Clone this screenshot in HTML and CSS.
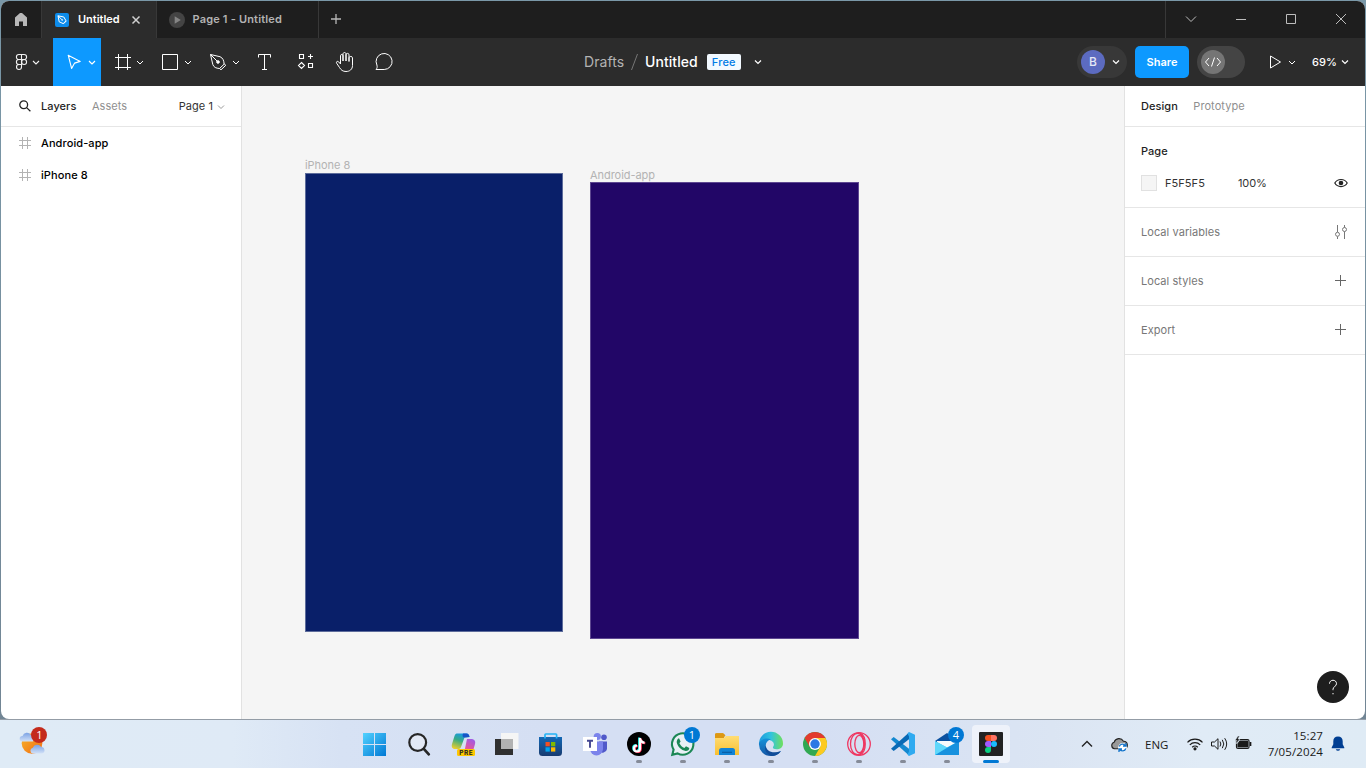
FILE: index.html
```html
<!DOCTYPE html>
<html lang="en">
<head>
<meta charset="utf-8">
<title>Untitled</title>
<link rel="stylesheet" href="styles.css">
</head>
<body>
<div class="window">
  <header class="tabs">
    <div class="tab-home"><svg width="40" height="37" viewBox="1 1 40 37"><path d="M15 17.600 20 13h2l5 4.600V26h-4v-4.500h-4V26H15z" fill="#b8b8b8"/></svg></div>
    <div class="tab active">
      <svg class="tab-icon" width="14" height="14" viewBox="55 12 14 14"><rect x="55" y="12" width="14" height="14" rx="2" fill="#0d8ceb"/><path d="M58 14.800 63.800 16l2.200 3.800-2.800 2.800-4-1.800zM58 14.800l4 4M63.500 22.800l3-3" fill="none" stroke="#fff" stroke-width="1"/><circle cx="62.200" cy="19" r=".8" fill="#fff"/></svg>
      <span class="tab-name">Untitled</span>
      <svg class="tab-close" width="10" height="10" viewBox="0 0 10 10"><path d="M1.500 1.500l7 7M8.500 1.500l-7 7" stroke="#d0d0d0" stroke-width="1.500"/></svg>
    </div>
    <div class="tab second">
      <svg class="tab-icon" width="16" height="16" viewBox="0 0 16 16"><circle cx="8" cy="8" r="8" fill="#444"/><path d="M5.700 4.200v7.600L11.800 8z" fill="#858585"/></svg>
      <span class="tab-name">Page 1 - Untitled</span>
    </div>
    <svg class="tab-add" width="34" height="37" viewBox="319 1 34 37"><path d="M331 19h10M336 14v10" stroke="#b8b8b8" stroke-width="1.300"/></svg>
    <svg class="window-controls" width="199" height="37" viewBox="1166 1 199 37" fill="none" stroke="#bdbdbd"><path d="M1186 16.500l5 5 5-5M1236 19.500h10M1286.500 14.500h9v9h-9zM1336 14l10 10M1346 14l-10 10"/></svg>
  </header>

  <div class="toolbar">
    <div class="tools">
      <svg width="52" height="48" viewBox="1 38 52 48" fill="none" stroke="#f2f2f2" stroke-width="1.100"><path d="M21.500 54.500h-2.600a2.500 2.500 0 0 0 0 5h2.600zM21.500 54.500h2.600a2.500 2.500 0 0 1 0 5h-2.600zM21.500 59.500h-2.600a2.500 2.500 0 0 0 0 5h2.600zM21.500 64.500h-2.600a2.500 2.500 0 1 0 2.600 2.500z"/><circle cx="24.100" cy="62" r="2.500"/><path d="M33 61l3 3 3-3"/></svg>
      <svg class="selected" width="48" height="48" viewBox="53 38 48 48" fill="none" stroke="#fff" stroke-width="1.100"><path d="M68.200 55.200l12 6.200-5.600 1.700-3 5.300zM89 61l3 3 3-3" stroke-linejoin="round"/></svg>
      <svg width="48" height="48" viewBox="101 38 48 48" fill="none" stroke="#fff"><path d="M115 57.500h16M115 67.500h16M118.500 54v16M127.500 54v16M137 61l3 3 3-3"/></svg>
      <svg width="48" height="48" viewBox="149 38 48 48" fill="none" stroke="#fff"><path d="M162.500 54.500h15v15h-15zM185 61l3 3 3-3"/></svg>
      <svg width="48" height="48" viewBox="197 38 48 48" fill="none" stroke="#fff"><path d="M210.500 54.500l9.500 2.200c3 1.300 4 4 4.100 7.500l-4.600 4.300c-3.500-.2-5.700-1.200-6.700-4zM210.500 54.500l6.600 6.600M219.500 68.500l1.500 1.300 4.800-4.500-1.700-1.500M233 61l3 3 3-3"/><circle cx="218" cy="62" r="1.300" fill="#fff"/></svg>
      <svg width="40" height="48" viewBox="245 38 40 48" fill="none" stroke="#fff"><path d="M258.500 57.500v-3h12v3M264.500 54.500v15M262 69.500h5"/></svg>
      <svg width="40" height="48" viewBox="285 38 40 48" fill="none" stroke="#fff" stroke-width="1.100"><path d="M299.500 54.500h4v4h-4zM308.500 63.500h4v4h-4zM310.500 54v5M308 56.500h5M301.500 62.500l3 3-3 3-3-3z"/></svg>
      <svg width="40" height="48" viewBox="325 38 40 48" fill="none" stroke="#fff"><path d="M340.500 64v-8.200c0-1.800 2.500-1.800 2.500 0V61v-7c0-2 3-2 3 0v7-6.200c0-1.900 3-1.900 3 0V61.500v-3.700c0-1.800 3.500-1.800 3.500 0v7.700c0 4-3 6-6.500 6-3.200 0-5-1.500-6.500-4l-2.800-4.200c-1-1.500.8-2.700 2-1.400z" stroke-linejoin="round"/></svg>
      <svg width="40" height="48" viewBox="365 38 40 48" fill="none" stroke="#fff"><path d="M376 69.500c1.300-1.500 1.400-2.700.9-4.500a8 8 0 1 1 7.300 4.500z" stroke-linejoin="round"/></svg>
    </div>
    <div class="file-title">
      <span class="folder">Drafts</span>
      <svg class="slash" width="7" height="16" viewBox="0 0 7 16"><path d="M6.500 0 .5 16" stroke="#777"/></svg>
      <span class="file-name">Untitled</span>
      <span class="plan">Free</span>
      <svg width="8" height="6" viewBox="0 0 8 6"><path d="M1 1.500l3 3 3-3" fill="none" stroke="#fff" stroke-width="1.200"/></svg>
    </div>
    <div class="actions">
      <div class="user"><span class="avatar">B</span><svg width="8" height="6" viewBox="0 0 8 6"><path d="M1 1.500l3 3 3-3" fill="none" stroke="#fff" stroke-width="1.200"/></svg></div>
      <button class="share">Share</button>
      <svg class="dev" width="48" height="32" viewBox="1197 46 48 32"><rect x="1197" y="46" width="48" height="32" rx="16" fill="#444"/><circle cx="1213" cy="62" r="12" fill="#757575"/><path d="M1209 58l-3.500 4 3.500 4M1217 58l3.500 4-3.500 4M1214.500 57.500l-3 9" fill="none" stroke="#fff"/></svg>
      <svg class="play" width="28" height="16" viewBox="1269 54 28 16" fill="none" stroke="#fff"><path d="M1270.500 56v12l10-6zM1289 61l3 3 3-3"/></svg>
      <span class="zoom">69%</span>
      <svg width="8" height="6" viewBox="0 0 8 6"><path d="M1 1.500l3 3 3-3" fill="none" stroke="#fff" stroke-width="1.200"/></svg>
    </div>
  </div>

  <main class="workspace">
    <aside class="layers">
      <div class="panel-head">
        <svg class="find" width="12" height="12" viewBox="0 0 12 12" fill="none" stroke="#222" stroke-width="1.300"><circle cx="4.700" cy="4.700" r="3.900"/><path d="M7.600 7.600l3.800 3.600"/></svg>
        <span class="strong">Layers</span><span class="muted assets">Assets</span>
        <span class="page-pick">Page 1</span>
        <svg width="8" height="6" viewBox="0 0 8 6"><path d="M1 1.500l3 3 3-3" fill="none" stroke="#999"/></svg>
      </div>
      <div class="layer"><svg width="12" height="12" viewBox="0 0 12 12"><path d="M0 3.500h12M0 8.500h12M3.500 0v12M8.500 0v12" stroke="#b3b3b3"/></svg>Android-app</div>
      <div class="layer"><svg width="12" height="12" viewBox="0 0 12 12"><path d="M0 3.500h12M0 8.500h12M3.500 0v12M8.500 0v12" stroke="#b3b3b3"/></svg>iPhone 8</div>
    </aside>
    <section class="canvas">
      <div class="artboard iphone"><span class="artboard-name">iPhone 8</span></div>
      <div class="artboard android"><span class="artboard-name">Android-app</span></div>
    </section>
    <aside class="inspector">
      <div class="panel-head"><span class="strong">Design</span><span class="muted proto">Prototype</span></div>
      <div class="page-section">
        <div class="strong">Page</div>
        <div class="fill">
          <span class="swatch"></span><span class="hex">F5F5F5</span><span class="opacity">100%</span>
          <svg width="14" height="10" viewBox="0 0 14 10"><path d="M.8 5C3.500.3 10.500.3 13.200 5 10.500 9.700 3.500 9.700.8 5z" fill="none" stroke="#222" stroke-width="1.200"/><circle cx="7" cy="5" r="2.300" fill="#222"/></svg>
        </div>
      </div>
      <div class="row">Local variables<svg width="14" height="16" viewBox="0 0 14 16" fill="none" stroke="#777"><path d="M3.500 1v7M3.500 12.500V15M10.500 1v2.500M10.500 7.500V15"/><circle cx="3.500" cy="10.300" r="2"/><circle cx="10.500" cy="5.500" r="2"/></svg></div>
      <div class="row">Local styles<svg class="plus" width="12" height="12" viewBox="0 0 12 12"><path d="M0 5.500h11M5.500 0v11" stroke="#666"/></svg></div>
      <div class="row">Export<svg class="plus" width="12" height="12" viewBox="0 0 12 12"><path d="M0 5.500h11M5.500 0v11" stroke="#666"/></svg></div>
      <button class="help"><svg width="32" height="32" viewBox="0 0 32 32"><path d="M12.500 12.700c0-4.600 7-4.600 7 0 0 2.800-3.500 2.800-3.500 5.500v1M16 22v1.300" fill="none" stroke="#fff"/></svg></button>
    </aside>
  </main>
</div>

<footer class="taskbar">
  <svg class="weather" width="60" height="48" viewBox="0 720 60 48">
    <defs>
      <linearGradient id="sun" x1="0" x2="1" y2="1"><stop stop-color="#f8b62c"/><stop offset="1" stop-color="#f06a12"/></linearGradient>
      <linearGradient id="cloud" x2="0" y2="1"><stop stop-color="#7ba2e4"/><stop offset="1" stop-color="#d2e1f7"/></linearGradient>
    </defs>
    <circle cx="32" cy="743.500" r="10.300" fill="url(#sun)"/>
    <path d="M22.500 741.500a2.800 2.800 0 0 1 0-5.600 4.600 4.600 0 0 1 8.400-.9 3.200 3.200 0 0 1 1.800 6.500z" fill="url(#cloud)"/>
    <path d="M32.500 753.500a3 3 0 0 1 .3-5.800 4.800 4.800 0 0 1 8.400-.7 3.300 3.300 0 0 1 .8 6.500z" fill="url(#cloud)"/>
    <circle cx="39" cy="735" r="8" fill="#c42b1c"/><text x="39.500" y="739" class="badge">1</text>
  </svg>
  <nav class="apps">
    <svg class="app" viewBox="352 720 44 48"><defs><linearGradient id="win" x2="1" y2="1"><stop stop-color="#52d2ff"/><stop offset="1" stop-color="#0078d4"/></linearGradient></defs><path d="M363 733h11v11h-11zM375 733h11v11h-11zM363 745h11v11h-11zM375 745h11v11h-11z" fill="url(#win)"/></svg>
    <svg class="app" viewBox="396 720 44 48"><circle cx="417.700" cy="742.500" r="8.400" fill="#e3e9f5" stroke="#262626" stroke-width="2.200"/><path d="M423.800 748.800l5 5.500" stroke="#262626" stroke-width="2.700" stroke-linecap="round"/></svg>
    <svg class="app" viewBox="440 720 44 48"><defs><linearGradient id="cpa" x1=".6" x2=".2" y2="1"><stop stop-color="#1599e8"/><stop offset=".45" stop-color="#39ab83"/><stop offset="1" stop-color="#efcf2b"/></linearGradient><linearGradient id="cpb" x1=".7" x2=".3" y2="1"><stop stop-color="#a05be4"/><stop offset=".6" stop-color="#e0569f"/><stop offset="1" stop-color="#f78b55"/></linearGradient></defs><path d="M457.500 733.500h9c2 0 2.500 1.500 3 3.500l-5 .5-3.500 9.500c-.5 1.500-1.500 2-3 2h-3c-3 0-3.700-2.500-3-5l2.500-8c.7-2 1.500-2.500 3-2.500z" fill="url(#cpa)"/><path d="M463 733.500h3.500c2 0 2.500 1.500 3 3.500l-5 .5c-1.500 0-2.500-1-1.500-4z" fill="#1755c7"/><path d="M467 739h4c3.500 0 4.800 2.300 4 5l-2 7c-.6 2-1.500 3-3.500 3h-8c1.500-.3 2.500-1.500 3-3z" fill="url(#cpb)"/><rect x="457" y="749" width="18" height="7" rx="1.500" fill="#fdc800"/><text x="466.200" y="755" class="pre">PRE</text></svg>
    <svg class="app" viewBox="484 720 44 48"><path d="M495 739h18v16h-18z" fill="#303030"/><path d="M501 733h17.500v16H501z" fill="#f5f5f5"/><path d="M501 739h12v10h-12z" fill="#b2b2b2"/></svg>
    <svg class="app" viewBox="528 720 44 48"><defs><linearGradient id="store" x2="0" y2="1"><stop stop-color="#1368b5"/><stop offset="1" stop-color="#183b70"/></linearGradient></defs><path d="M539 737h23v15.500q0 3.500-3.500 3.500h-16q-3.500 0-3.500-3.500z" fill="url(#store)"/><path d="M545 738.500v-3.700q0-.8.800-.8h10q.8 0 .8.800v3.700" fill="none" stroke="#25b4f5" stroke-width="1.700"/><path d="M545.500 742h4.300v4.300h-4.300z" fill="#f25022"/><path d="M551 742h4.300v4.300H551z" fill="#7fba00"/><path d="M545.500 747.300h4.300v4.300h-4.300z" fill="#00a4ef"/><path d="M551 747.300h4.300v4.300H551z" fill="#ffb900"/></svg>
    <svg class="app" viewBox="572 720 44 48"><circle cx="604" cy="737.200" r="2.800" fill="#5059c9"/><circle cx="597.300" cy="736.500" r="3.600" fill="#7b83eb"/><path d="M599 741.500h8v7.500a4.500 4.500 0 0 1-8 2z" fill="#5059c9"/><path d="M590 741.500h13v7.500a6.500 6.500 0 0 1-13 0z" fill="#7b83eb"/><path d="M583 737h14v14h-14z" fill="#fff"/><path d="M587 740.800h6M590 740.800v7" stroke="#444791" stroke-width="1.900"/></svg>
    <svg class="app running" viewBox="616 720 44 48"><circle cx="639" cy="744" r="12" fill="#000"/><g fill="none" stroke-width="2.200"><path d="M639.200 737.500v10.500a3 3 0 1 1-3-3M639.200 738c.5 2.800 2 4 4.500 4.200" stroke="#25f4ee"/><path d="M640.800 738.500v10.500a3 3 0 1 1-3-3M640.800 739c.5 2.800 2 4 4.500 4.200" stroke="#fe2c55"/><path d="M640 738v10.500a3 3 0 1 1-3-3M640 738.500c.5 2.800 2 4 4.500 4.200" stroke="#fff"/></g><rect x="636" y="760" width="6" height="3" rx="1.500" fill="#858b98"/></svg>
    <svg class="app running" viewBox="660 720 44 48"><path d="M672.300 754.700l1.300-5.100a10.700 10.700 0 1 1 4 3.800z" fill="#e8f0f5" stroke="#1b8755" stroke-width="2.100"/><path d="M679 738.300l1.600 3.300-1.200 1.600c1.200 2.400 2.800 3.800 5 4.700l1.600-1.600 3.300 1.600c0 2-1.600 3.100-3.600 3-4.400-.5-8.300-4.400-9-8.600 0-1.800.8-3.500 2.300-4z" fill="#1b8755"/><circle cx="692" cy="735" r="8" fill="#0078d4"/><text x="692" y="739" class="badge">1</text><rect x="680" y="760" width="6" height="3" rx="1.500" fill="#858b98"/></svg>
    <svg class="app running" viewBox="704 720 44 48"><defs><linearGradient id="folder" x2="0" y2="1"><stop stop-color="#ffdd74"/><stop offset="1" stop-color="#f9bf2f"/></linearGradient></defs><path d="M715 741v-6q0-1.700 1.700-1.700h6.300l2.500 2.200H715z" fill="#dd9813"/><path d="M715 734.500q0-1.200 1.200-1.200h6.800l2.300 2-1.500 2.700H715z" fill="#dd9813"/><path d="M715 738h9l2-2h13v19h-24z" fill="url(#folder)"/><path d="M719 755v-4.500q0-2.500 2.500-2.500h11q2.500 0 2.500 2.500v4.500z" fill="#1183d5"/><path d="M722 751.700h10v1.300h-10z" fill="#0a60a8"/><rect x="724" y="760" width="6" height="3" rx="1.500" fill="#858b98"/></svg>
    <svg class="app running" viewBox="748 720 44 48"><defs><linearGradient id="edgea" x2="1"><stop stop-color="#1c9ade"/><stop offset=".5" stop-color="#32c3de"/><stop offset="1" stop-color="#6fe05b"/></linearGradient><linearGradient id="edgeb" y2="1" x2="0"><stop stop-color="#1592da"/><stop offset="1" stop-color="#1456a5"/></linearGradient></defs><path d="M759 744a12 12 0 0 1 24-.5c0 4-3 5.800-6.500 5.800-3 0-4.300-1.300-3.200-2.700 2-3-1-6.600-4.800-6.600-4.500 0-8.500 2-9.500 4z" fill="url(#edgea)"/><path d="M759 743c2-4 8-6 12-3.500-4 1-6 4-5 8 1.300 5 8 7.500 15 3.500-3.500 5-8 5-10 5a12 12 0 0 1-12-13z" fill="url(#edgeb)"/><path d="M765.800 745.500c0 5 6.200 9 15.200 5.500-3 4-7 5-9.500 4.900-6-2.400-7.500-6.900-5.700-10.400z" fill="#114d99"/><rect x="768" y="760" width="6" height="3" rx="1.500" fill="#858b98"/></svg>
    <svg class="app running" viewBox="792 720 44 48"><circle cx="815" cy="744" r="12" fill="#31a852"/><path d="M804.600 738a12 12 0 0 1 20.800 0H815l-5.200 9z" fill="#e33b2e"/><path d="M825.400 738a12 12 0 0 1-10.400 18l5.200-9 0-6-5.200-3z" fill="#fdca20"/><circle cx="815" cy="744" r="6" fill="#fff"/><circle cx="815" cy="744" r="4.700" fill="#2b78e4"/><rect x="812" y="760" width="6" height="3" rx="1.500" fill="#858b98"/></svg>
    <svg class="app running" viewBox="836 720 44 48" fill="none" stroke="#ef3761" stroke-width="1.300"><circle cx="859" cy="744" r="11.300"/><ellipse cx="857.500" cy="744" rx="7" ry="10.700"/><ellipse cx="859.300" cy="744" rx="4.500" ry="8.600"/><path d="M860 733.200c7 3 7 18.600 0 21.600"/><rect x="856" y="760" width="6" height="3" rx="1.500" fill="#858b98" stroke="none"/></svg>
    <svg class="app running" viewBox="880 720 44 48"><path d="M891 739.300l2.700-2.300 15.300 11.800v6.700z" fill="#1388d0"/><path d="M891 748.700l2.700 2.300 15.300-11.800v-6.700z" fill="#0869b5"/><path d="M909 732l6 2.700v18.600l-6 2.700-1.500-1.500 1.500-3v-15l-1.500-3z" fill="#2faaf0"/><rect x="900" y="760" width="6" height="3" rx="1.500" fill="#858b98"/></svg>
    <svg class="app running" viewBox="924 720 44 48"><path d="M935 741l12-8 12 8v2h-24z" fill="#0b51a0"/><path d="M937 741h20v6h-20z" fill="#f7fafc"/><path d="M935 741l12 6.500 12-6.500v14h-24z" fill="#35bdf0"/><path d="M935 755l24-14v14z" fill="#1791de"/><path d="M935 741l12 6.500-12 7.500z" fill="#5ed7fb"/><circle cx="956" cy="735" r="8" fill="#0078d4"/><text x="956" y="739" class="badge">4</text><rect x="944" y="760" width="6" height="3" rx="1.500" fill="#858b98"/></svg>
    <svg class="app current" viewBox="968 720 44 48"><rect x="972" y="725" width="38" height="38" rx="4" fill="#eef2fa"/><rect x="979" y="732" width="24" height="24" rx="1" fill="#222"/><path d="M991 735h-3a3 3 0 0 0 0 6h3z" fill="#f24e1e"/><path d="M991 735h3a3 3 0 0 1 0 6h-3z" fill="#ff7262"/><path d="M991 741h-3a3 3 0 0 0 0 6h3z" fill="#a259ff"/><circle cx="994" cy="744" r="3" fill="#1abcfe"/><path d="M991 747h-3a3 3 0 1 0 3 3z" fill="#0acf83"/><rect x="983" y="760" width="16" height="3" rx="1.500" fill="#0078d4"/></svg>
  </nav>
  <div class="tray">
    <svg width="70" height="48" viewBox="1070 720 70 48"><path d="M1082 746.500l5-5 5 5" fill="none" stroke="#222" stroke-width="1.400"/><path d="M1114.500 748.800a3.400 3.400 0 0 1-.3-6.600 5 5 0 0 1 9.200-.9 3.800 3.800 0 0 1 1 7.500z" fill="#999" stroke="#222" stroke-width="1.100"/><circle cx="1122.500" cy="747.500" r="4.400" fill="#fff"/><path d="M1119.300 746.500a3.400 3.400 0 0 1 6-1M1126 743v3h-3M1125.800 748.500a3.400 3.400 0 0 1-6 1M1119 752v-3h3" fill="none" stroke="#1273ca" stroke-width="1.300"/></svg>
    <span class="language">ENG</span>
    <svg class="status" width="76" height="48" viewBox="1181 720 76 48" fill="none" stroke="#1a1a1a" stroke-width="1.200"><path d="M1187.500 742.300a10.600 10.600 0 0 1 15 0M1189.800 744.900a7.300 7.300 0 0 1 10.400 0M1192.200 747.200a4 4 0 0 1 5.600 0"/><circle cx="1195" cy="748.800" r="1" fill="#1a1a1a"/><path d="M1211.500 742h3l3.500-3.300v10.600l-3.500-3.300h-3zM1220 741.500q1.700 2.500 0 5M1222.300 739.800q3 4.200 0 8.400M1224.700 738.200q4 5.800 0 11.600" stroke-width="1"/><rect x="1236.500" y="739.500" width="12.500" height="9" rx="1.500"/><path d="M1240 741h7.500v6h-9.500v-3z" fill="#1a1a1a"/><path d="M1250.500 742v4" stroke-width="1.700"/><path d="M1238 736l-3 4.500h2l-1 3.500 4-5h-2l1.500-3z" fill="#1a1a1a" stroke="#e1ecf6" stroke-width=".5"/></svg>
    <div class="clock"><span>15:27</span><span>7/05/2024</span></div>
    <svg class="bell" width="14" height="16" viewBox="0 0 14 16"><path d="M7 .5c3 0 4.700 2 4.700 4.800v3l1.600 3.200v.8H.7v-.8l1.600-3.200v-3C2.300 2.500 4 .5 7 .5zM4.800 13.200h4.400a2.300 2.300 0 0 1-4.400 0z" fill="#003e92"/></svg>
  </div>
</footer>
</body>
</html>
```

FILE: styles.css
```css
* { box-sizing: border-box; }
body {
  margin: 0;
  width: 1366px;
  height: 768px;
  overflow: hidden;
  background: linear-gradient(#7a98a8, #718493);
  font: 11px/16px Inter, "Liberation Sans", sans-serif;
  letter-spacing: 0.055px;
  color: #333;
}
svg { display: block; flex: none; }
button { border: 0; padding: 0; font: inherit; letter-spacing: inherit; }

.window {
  margin: 1px 1px 0;
  height: 718px;
  border-radius: 8px;
  overflow: hidden;
  background: #fff;
}

.tabs { display: flex; height: 37px; background: #1e1e1e; color: #b3b3b3; font-weight: 600; letter-spacing: 0; }
.tab-home { width: 41px; border-right: 1px solid #383838; }
.tab { display: flex; align-items: center; border-right: 1px solid #383838; }
.tab.active { width: 115px; padding-left: 13px; background: #2c2c2c; color: #fff; }
.tab.second { width: 162px; padding-left: 12px; }
.tab-name { margin-bottom: 2px; }
.tab.active .tab-name { width: 44px; margin-left: 9px; }
.tab.second .tab-name { margin-left: 7.5px; letter-spacing: 0.18px; }
.tab-close { margin-left: 9px; }
.window-controls { margin-left: auto; border-left: 1px solid #383838; width: 200px; }

.toolbar { display: grid; grid-template-columns: 583px 1fr auto; height: 48px; background: #2c2c2c; }
.tools { display: flex; }
.selected { background: #0d99ff; }
.file-title { display: flex; align-items: center; font-size: 14px; letter-spacing: 0.05px; color: #b3b3b3; }
.slash { margin: 0 7px; }
.file-name { color: #fff; font-weight: 500; }
.plan { margin: 0 13px 0 9px; width: 34px; border-radius: 2px; background: #f2f9ff; color: #007be5; font-size: 11px; font-weight: 500; letter-spacing: 0.2px; text-align: center; }
.actions { display: flex; align-items: center; padding-right: 16px; color: #fff; font-weight: 500; }
.user { display: flex; align-items: center; width: 50px; height: 32px; padding-left: 4px; border-radius: 16px; background: #383838; }
.user svg { margin-left: 7px; }
.avatar { width: 24px; height: 24px; border-radius: 50%; background: #5c6bc0; font-size: 12px; line-height: 24px; text-align: center; color: #e5e8f5; }
.share { width: 54px; height: 32px; margin: 0 8px; border-radius: 5px; background: #0d99ff; color: #fff; font-weight: 600; }
.play { margin: 0 15px 0 24px; }
.zoom { width: 29px; }

.workspace { display: grid; grid-template-columns: 241px 1fr 241px; height: 633px; }
.layers { border-right: 1px solid #e2e2e2; }
.panel-head { display: flex; align-items: center; height: 41px; border-bottom: 1px solid #e6e6e6; }
.strong { color: #1e1e1e; font-weight: 500; }
.muted { color: #8f8f8f; }
.find { margin: 0 10px 0 18px; }
.layers .muted { margin-left: 15.5px; }
.page-pick { margin-left: auto; }
.page-pick + svg { margin: 1px 16px 0 4px; }
.layer { display: flex; align-items: center; gap: 10px; height: 32px; padding-left: 18px; color: #000; font-weight: 500; letter-spacing: 0.1px; }

.canvas { position: relative; background: #f5f5f5; }
.artboard { position: absolute; }
.artboard-name { position: absolute; left: -1px; bottom: 100%; color: #b3b3b3; letter-spacing: -0.05px; white-space: nowrap; }
.iphone { left: 63px; top: 87px; width: 258px; height: 459px; background: #091f69; border: 1px solid #5d6c9b; }
.iphone .artboard-name { margin-bottom: 1px; }
.android { left: 348px; top: 96px; width: 269px; height: 457px; background: #220667; border: 1px solid #5e4791; }

.inspector { display: flex; flex-direction: column; border-left: 1px solid #e2e2e2; }
.inspector .strong { padding-left: 16px; }
.proto { margin-left: 15.5px; }
.page-section { height: 81px; padding-top: 16px; border-bottom: 1px solid #e6e6e6; }
.fill { display: flex; align-items: center; padding: 16px 17px 0 16px; }
.swatch { width: 16px; height: 16px; margin-right: 8px; border: 1px solid #e1e1e1; background: #f5f5f5; }
.hex { width: 73px; }
.opacity { flex: 1; letter-spacing: -0.1px; }
.row { display: flex; justify-content: space-between; align-items: center; height: 49px; padding: 0 17px 0 16px; border-bottom: 1px solid #e6e6e6; color: #777; }
.plus { margin-right: 1px; }
.help { width: 32px; height: 32px; margin: auto 16px 16px auto; border-radius: 50%; background: #1e1e1e; }

.taskbar {
  display: flex;
  height: 49px;
  border-top: 1px solid #939ca6;
  background: linear-gradient(90deg, #dfebf6, #dfeaf6 17%, #d7e2f4 25%, #d5dff3 40%, #d5dff3 60%, #dbe5f3 77%, #e0ebf6 88%, #dfebf5);
  font-family: "Open Sans", "Noto Sans", sans-serif;
  letter-spacing: 0;
  color: #1a1a1a;
}
.apps { display: flex; margin-left: 292px; }
.app { width: 44px; height: 48px; }
.badge { fill: #fff; font: 11px "Open Sans", sans-serif; text-anchor: middle; }
.pre { fill: #222; font: 700 6.5px Inter, sans-serif; letter-spacing: 0.5px; text-anchor: middle; }
.tray { display: flex; align-items: center; margin-left: 58px; }
.language { width: 36px; margin: 2px 0 0 5px; font-size: 11.500px; line-height: 16px; }
.clock { display: flex; flex-direction: column; width: 66px; text-align: right; font-size: 11.500px; line-height: 16px; letter-spacing: 0.1px; }
.bell { margin-left: 8px; }
```
